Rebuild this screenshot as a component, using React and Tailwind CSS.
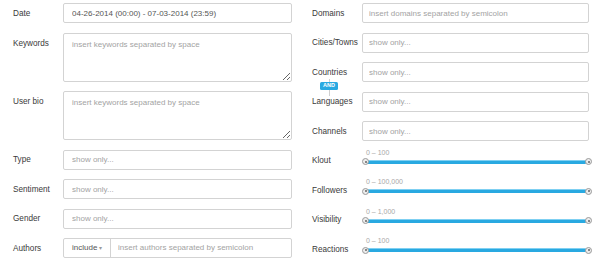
// App.jsx - search filter form (two columns: text filters, audience sliders)

const font = { fontFamily: '"Liberation Sans", Arial, sans-serif' };

function Label({ children, top }) {
  return (
    <div
      className={
        'relative whitespace-nowrap text-[8.2px] text-[#3a3a3a] ' +
        (top ? 'self-start pt-[6px] leading-[10px]' : 'pt-[1px] leading-[10px]')
      }
    >
      {children}
    </div>
  );
}

function TextInput({ placeholder, value, pad = 'px-[8px]' }) {
  return (
    <input
      type="text"
      defaultValue={value}
      placeholder={placeholder}
      className={
        'h-[20px] w-full rounded-[2px] border border-[#d3d3d3] bg-white text-[8px] text-[#555] outline-none placeholder:text-[#a3a3a3] ' +
        pad
      }
      style={font}
    />
  );
}

function TextArea({ placeholder }) {
  return (
    <textarea
      placeholder={placeholder}
      className="block h-[49px] w-full resize-y rounded-[2px] border border-[#d3d3d3] bg-white px-[8px] pt-[6px] text-[8px] leading-[10px] text-[#555] outline-none placeholder:text-[#a3a3a3]"
      style={font}
    />
  );
}

// range slider: value text above, blue track, two round handles at the ends
function Slider({ range }) {
  return (
    <div className="h-[20px]">
      <div className="-mt-[2px] flex flex-col">
        <div className="pl-[4px] text-[7px] leading-[8px] text-[#a8a8a8]">{range}</div>
        <div className="relative flex h-[10px] items-center px-[3px]">
          <div className="h-[4px] w-full rounded-[1px] border-t border-[#7fd0f2] bg-[#29a9e1]" />
          <div className="absolute left-0 top-[1.5px] flex h-[7px] w-[7px] items-center justify-center rounded-full border border-[#9a9a9a] bg-[#ececec]">
            <div className="h-[2px] w-[2px] rounded-full bg-[#666]" />
          </div>
          <div className="absolute -right-[3px] top-[1.5px] flex h-[7px] w-[7px] items-center justify-center rounded-full border border-[#9a9a9a] bg-[#ececec]">
            <div className="h-[2px] w-[2px] rounded-full bg-[#666]" />
          </div>
        </div>
      </div>
    </div>
  );
}

export default function App() {
  const sliders = [
    { label: 'Klout', range: '0 – 100' },
    { label: 'Followers', range: '0 – 100,000' },
    { label: 'Visibility', range: '0 – 1,000' },
    { label: 'Reactions', range: '0 – 100' },
  ];

  return (
    <div className="flex h-[270px] w-[604px] bg-white" style={font}>
      {/* left column */}
      <div className="grid w-[300px] grid-cols-[50px_229px] content-start items-center gap-y-[9.5px] pl-[13px] pt-[3px]">
        <Label>Date</Label>
        <TextInput value="04-26-2014 (00:00) - 07-03-2014 (23:59)" />

        <Label top>Keywords</Label>
        <TextArea placeholder="insert keywords separated by space" />

        <Label top>User bio</Label>
        <TextArea placeholder="insert keywords separated by space" />

        <Label>Type</Label>
        <TextInput placeholder="show only..." />

        <Label>Sentiment</Label>
        <TextInput placeholder="show only..." />

        <Label>Gender</Label>
        <TextInput placeholder="show only..." />

        <Label>Authors</Label>
        <div className="flex h-[20px] w-full rounded-[2px] border border-[#d3d3d3] bg-white">
          <div className="flex w-[47px] shrink-0 items-center gap-[2px] border-r border-[#d3d3d3] pl-[8px] text-[8px] text-[#555]">
            include <span className="text-[6px] text-[#999]">▾</span>
          </div>
          <input
            type="text"
            placeholder="insert authors separated by semicolon"
            className="min-w-0 flex-1 bg-transparent px-[7px] text-[8px] outline-none placeholder:text-[#a3a3a3]"
            style={font}
          />
        </div>
      </div>

      {/* right column */}
      <div className="grid grid-cols-[50px_227px] content-start items-center gap-y-[9.5px] pl-[12px] pt-[3px]">
        <Label>Domains</Label>
        <TextInput placeholder="insert domains separated by semicolon" pad="px-[6px]" />

        <Label>Cities/Towns</Label>
        <TextInput placeholder="show only..." pad="px-[6px]" />

        <Label>
          Countries
          {/* AND connector between countries and languages */}
          <div className="absolute left-[17px] top-[12px] h-[17px] w-px bg-[#cfcfcf]" />
          <div className="absolute left-[8px] top-[15.5px] flex h-[8px] w-[18px] items-center justify-center rounded-[1.5px] bg-[#29a9e1] text-[5.5px] font-bold leading-none text-white">
            AND
          </div>
        </Label>
        <TextInput placeholder="show only..." pad="px-[6px]" />

        <Label>Languages</Label>
        <TextInput placeholder="show only..." pad="px-[6px]" />

        <Label>Channels</Label>
        <TextInput placeholder="show only..." pad="px-[6px]" />

        {sliders.map((s) => (
          <div key={s.label} className="contents">
            <Label>{s.label}</Label>
            <Slider range={s.range} />
          </div>
        ))}
      </div>
    </div>
  );
}
